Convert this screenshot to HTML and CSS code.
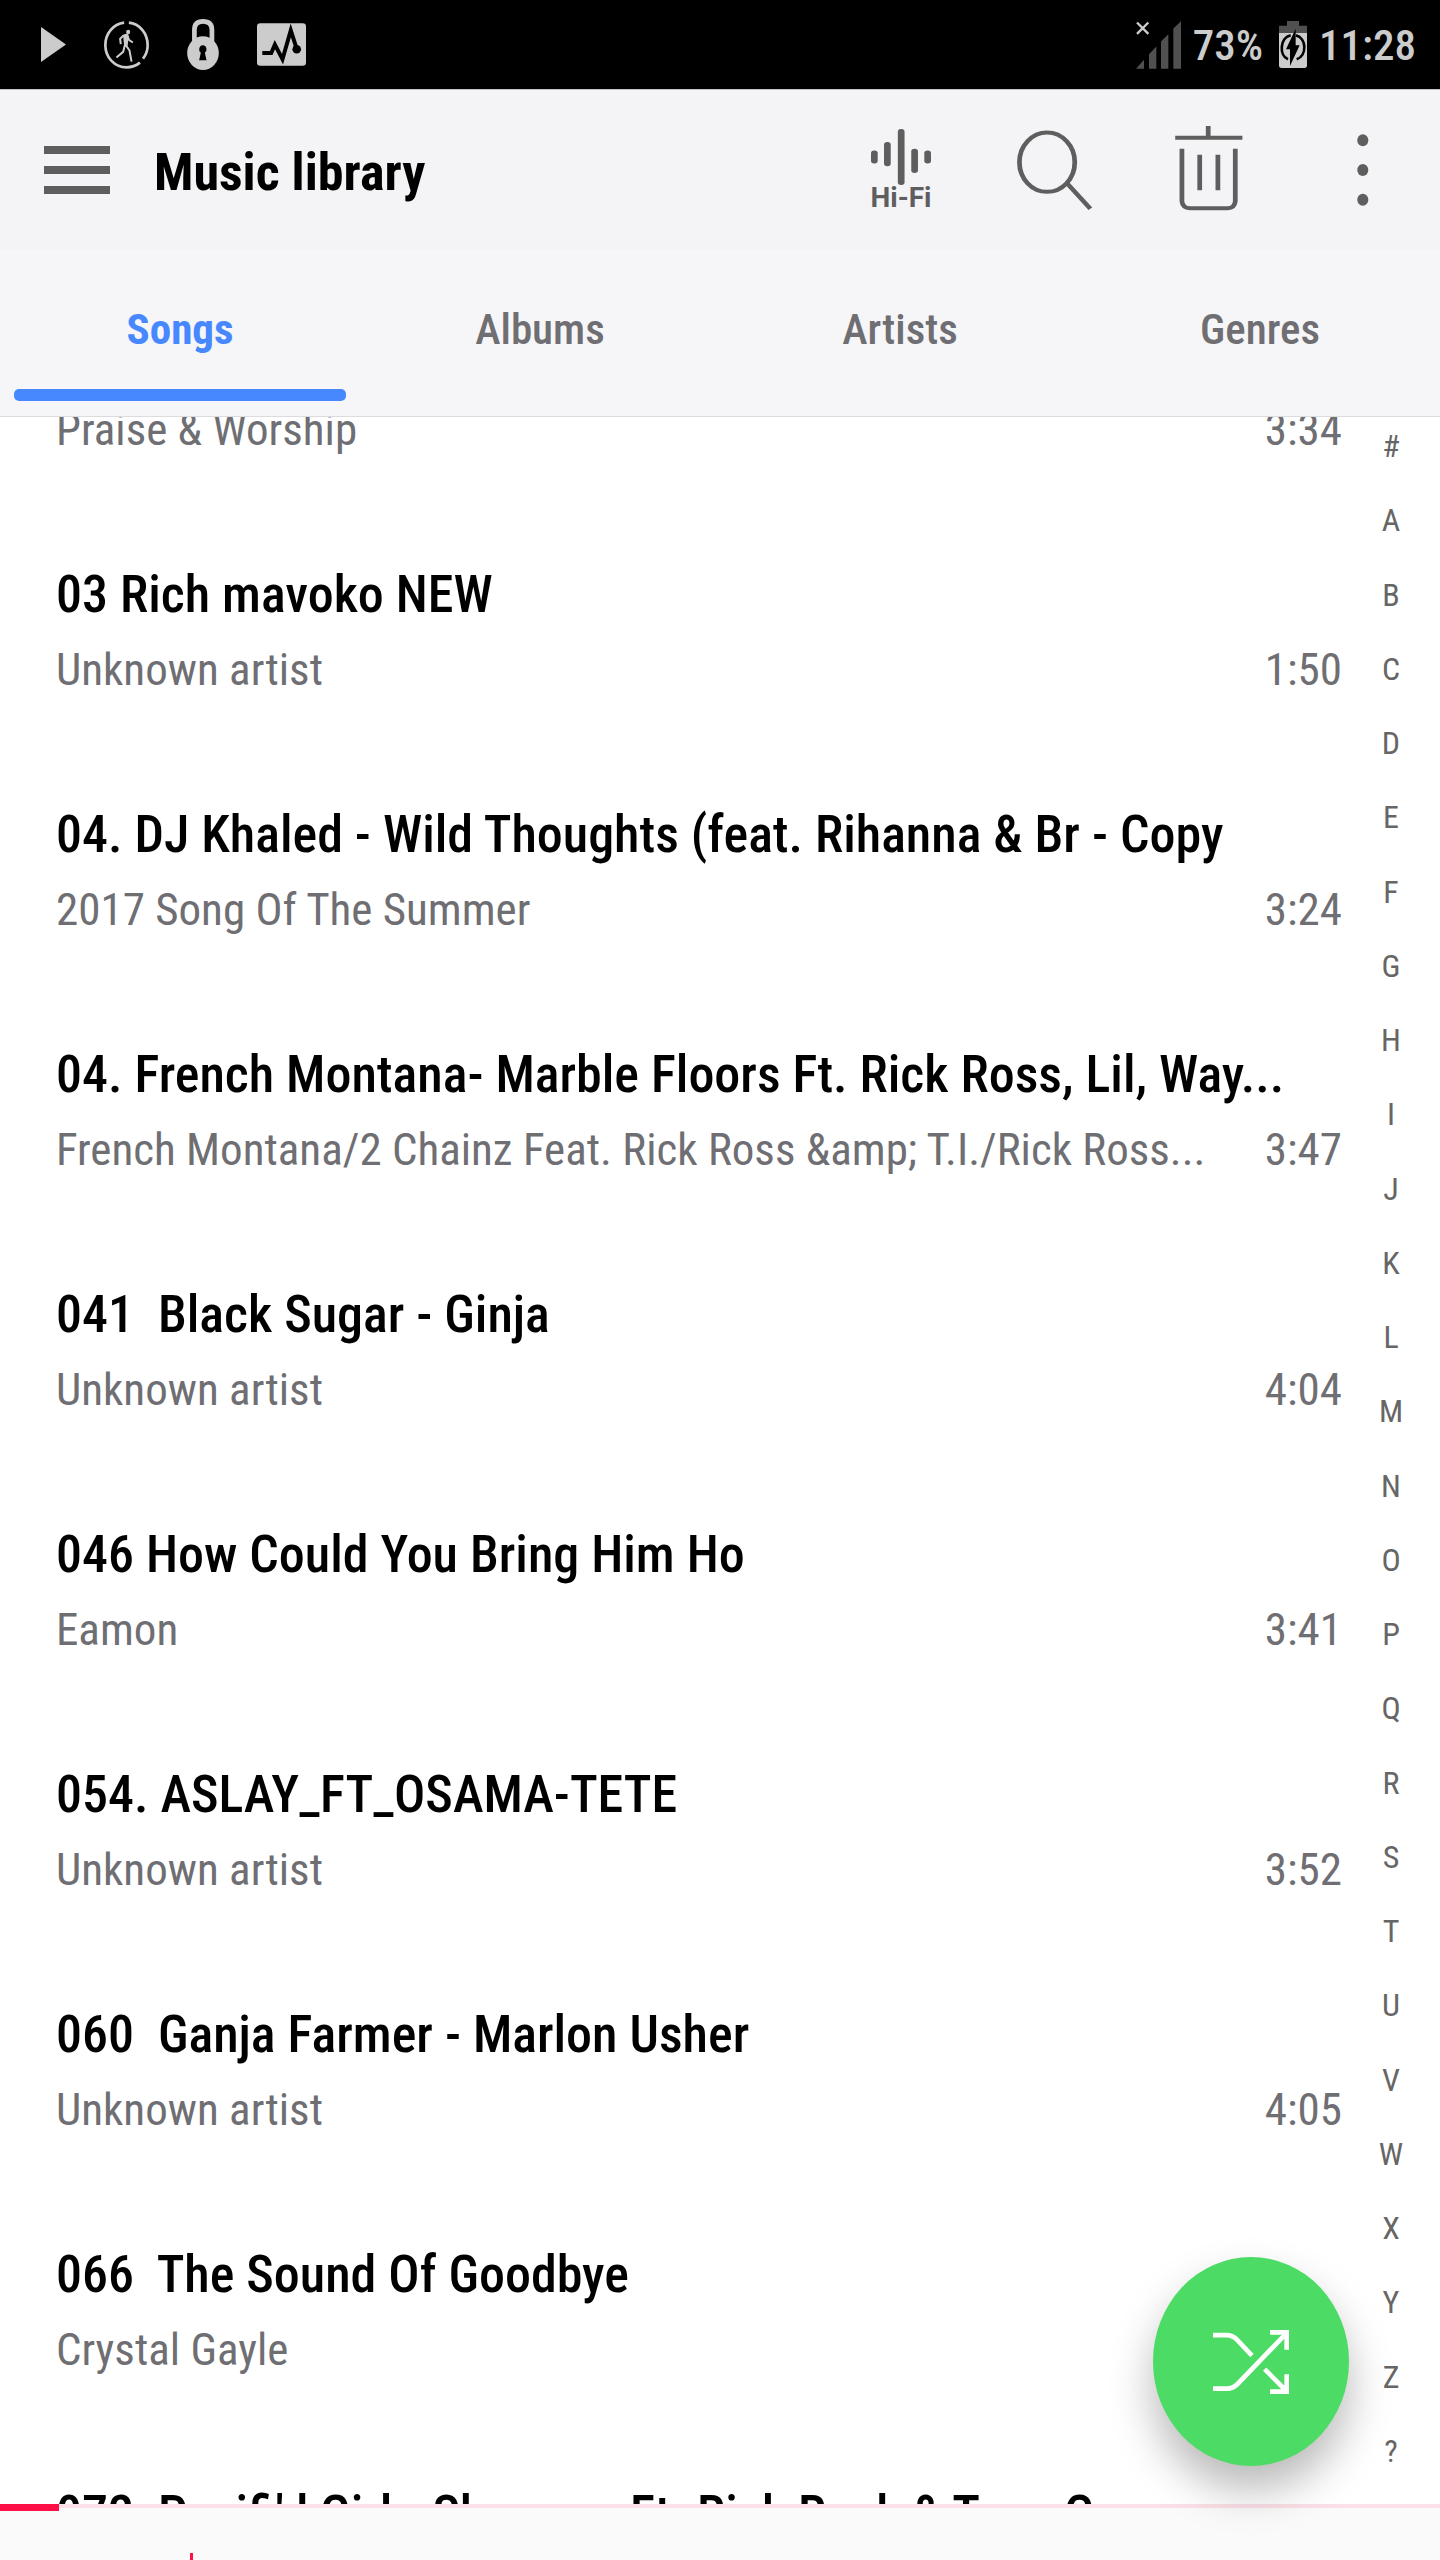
FILE: index.html
```html
<!DOCTYPE html>
<html lang="en">
<head>
<meta charset="utf-8">
<meta name="viewport" content="width=device-width, initial-scale=1">
<title>Music library</title>
<link rel="stylesheet" href="styles.css">
</head>
<body>
<div class="app">
  <div class="status">
    <div class="status-group status-left">
      <svg class="glyph" width="25" height="35" viewBox="0 0 25 35" aria-hidden="true"><path d="M0 0L25 17.500L0 35Z"/></svg>
      <svg class="glyph" width="45" height="48" viewBox="318 60 134 143" preserveAspectRatio="none" aria-hidden="true">
        <path d="M378 65C345 69 322 98 322 132C322 169 350 198 385 198C400 198 414 193 425 184M392 65C424 68 448 97 448 132C448 148 443 161 434 172" fill="none" stroke="#ccc" stroke-width="8"/>
        <ellipse cx="390" cy="93" rx="6" ry="7"/>
        <path d="M376 103L386 101L393 117L404 124M376 103L366 113L368 129M385 105L381 129L394 148L400 181M380 132L375 152L355 169" fill="none" stroke="#ccc" stroke-width="6"/>
        <path d="M375 103L392 103L388 135L378 135Z"/>
      </svg>
      <svg class="glyph" width="32" height="51" viewBox="569 56 95 151" preserveAspectRatio="none" aria-hidden="true">
        <path d="M591 122V88C591 70 601 63 616.500 63C632 63 643 70 643 88V122" fill="none" stroke="#ccc" stroke-width="14"/>
        <ellipse cx="616.500" cy="157" rx="47" ry="50"/>
        <path d="M616 134a11 12 0 0 1 6 22l5 22h-22l5-22a11 12 0 0 1 6-22Z" fill="#000"/>
      </svg>
      <svg class="glyph" width="49" height="43" viewBox="773 67 148 129" aria-hidden="true">
        <rect x="773" y="67" width="148" height="129" rx="10"/>
        <path d="M789 157H816L827 132L850 176L875 89L893 145" fill="none" stroke="#000" stroke-width="12"/>
        <circle cx="893" cy="146" r="13" fill="#000"/>
      </svg>
    </div>
    <div class="status-group">
      <svg width="45" height="48" viewBox="123 61 135 143" aria-hidden="true">
        <path d="M123 204L147 177V204ZM162 204V160L184 137V204ZM198 204V122L220 100V204ZM235 204V83L258 61V204Z" fill="#505050"/>
        <path d="M126 65L160 99M160 65L126 99" stroke="#ccc" stroke-width="7"/>
      </svg>
      <span>73%</span>
      <svg class="glyph battery" width="28" height="47" viewBox="561 63 84 141" aria-hidden="true">
        <path d="M585 63H621V77H645V99H561V77H585Z" fill="#505050"/>
        <path d="M561 99H645V196Q645 204 637 204H569Q561 204 561 196Z"/>
        <path d="M596 106C564 112 560 166 588 178M612 106C644 114 646 166 614 178" fill="none" stroke="#000" stroke-width="8"/>
        <path d="M611 86L582 148H594V198L623 136H611Z" fill="#000"/>
      </svg>
      <span>11:28</span>
    </div>
  </div>

  <header class="toolbar">
    <button class="menu-btn" type="button" aria-label="Menu"><span class="menu-lines"></span></button>
    <h1 class="title">Music library</h1>
    <div class="actions">
      <button class="action" type="button">
        <svg width="60" height="56" viewBox="129 121 152 167" preserveAspectRatio="none" aria-hidden="true"><g fill="#5e5e5e"><rect x="129" y="185" width="17" height="39" rx="8"/><rect x="162" y="160" width="17" height="72" rx="8"/><rect x="197" y="121" width="17" height="167" rx="8"/><rect x="231" y="180" width="17" height="72" rx="8"/><rect x="264" y="185" width="17" height="39" rx="8"/></g></svg>
        <span class="hifi">Hi-Fi</span>
      </button>
      <button class="action" type="button" aria-label="Search">
        <svg class="line" width="100" height="100" viewBox="468 90 253 300" preserveAspectRatio="none" aria-hidden="true"><ellipse cx="574.500" cy="216.500" rx="70" ry="89"/><path d="M626 281L684 356"/></svg>
      </button>
      <button class="action" type="button" aria-label="Delete">
        <svg class="line" width="100" height="100" viewBox="858 90 253 300" preserveAspectRatio="none" aria-hidden="true"><path d="M899 143.500H1069M982.500 108V143M916 176V334Q918 354 936 355H1032Q1049 354 1051 334V176M961 194V301M1007 194V301"/></svg>
      </button>
      <button class="action" type="button" aria-label="More options">
        <svg width="100" height="100" viewBox="1247 90 253 300" preserveAspectRatio="none" aria-hidden="true"><g fill="#5e5e5e"><ellipse cx="1373" cy="151" rx="14" ry="18"/><ellipse cx="1373" cy="240" rx="14" ry="18"/><ellipse cx="1373" cy="329" rx="14" ry="18"/></g></svg>
      </button>
    </div>
  </header>

  <nav class="tabs" aria-label="Library">
    <a class="tab tab-active" href="#songs" aria-current="page">Songs</a>
    <a class="tab" href="#albums">Albums</a>
    <a class="tab" href="#artists">Artists</a>
    <a class="tab" href="#genres">Genres</a>
  </nav>

  <main class="content" id="songs">
    <ul class="songs">
      <li class="song song-scrolled"><div class="meta"><span class="artist">Praise &amp; Worship</span><span>3:34</span></div></li>
      <li class="song"><div class="name">03 Rich mavoko NEW</div><div class="meta"><span class="artist">Unknown artist</span><span>1:50</span></div></li>
      <li class="song"><div class="name">04. DJ Khaled - Wild Thoughts (feat. Rihanna &amp; Br - Copy</div><div class="meta"><span class="artist">2017 Song Of The Summer</span><span>3:24</span></div></li>
      <li class="song"><div class="name">04. French Montana- Marble Floors Ft. Rick Ross, Lil, Way...</div><div class="meta"><span class="artist">French Montana/2 Chainz Feat. Rick Ross &amp;amp; T.I./Rick Ross...</span><span>3:47</span></div></li>
      <li class="song"><div class="name">041  Black Sugar - Ginja</div><div class="meta"><span class="artist">Unknown artist</span><span>4:04</span></div></li>
      <li class="song"><div class="name">046 How Could You Bring Him Ho</div><div class="meta"><span class="artist">Eamon</span><span>3:41</span></div></li>
      <li class="song"><div class="name">054. ASLAY_FT_OSAMA-TETE</div><div class="meta"><span class="artist">Unknown artist</span><span>3:52</span></div></li>
      <li class="song"><div class="name">060  Ganja Farmer - Marlon Usher</div><div class="meta"><span class="artist">Unknown artist</span><span>4:05</span></div></li>
      <li class="song"><div class="name">066  The Sound Of Goodbye</div><div class="meta"><span class="artist">Crystal Gayle</span></div></li>
      <li class="song"><div class="name">072  Pacifi'd Girl - Shawana Ft. Rick Rock &amp; Tone C</div></li>
    </ul>
    <nav class="index" aria-label="Alphabet index">
      <a href="#songs">#</a><a href="#songs">A</a><a href="#songs">B</a><a href="#songs">C</a><a href="#songs">D</a><a href="#songs">E</a><a href="#songs">F</a><a href="#songs">G</a><a href="#songs">H</a><a href="#songs">I</a><a href="#songs">J</a><a href="#songs">K</a><a href="#songs">L</a><a href="#songs">M</a><a href="#songs">N</a><a href="#songs">O</a><a href="#songs">P</a><a href="#songs">Q</a><a href="#songs">R</a><a href="#songs">S</a><a href="#songs">T</a><a href="#songs">U</a><a href="#songs">V</a><a href="#songs">W</a><a href="#songs">X</a><a href="#songs">Y</a><a href="#songs">Z</a><a href="#songs">?</a>
    </nav>
  </main>

  <footer class="player">
    <div class="track"><div class="progress" style="width:4.100%"></div></div>
    <div class="needle"></div>
  </footer>

  <button class="shuffle" type="button" aria-label="Shuffle">
    <svg width="76" height="64" viewBox="279 330 228 190" preserveAspectRatio="none" aria-hidden="true"><path d="M279 345H320C332 345 341 349 350 358L396 406M279 504H320C332 504 343 500 352 491L496 343M450 337H500V389M434 446L496 508M450 513H500V461" fill="none" stroke="#fff" stroke-width="14"/></svg>
  </button>
</div>
</body>
</html>
```
FILE: styles.css
```css
* { box-sizing: border-box; }

body {
  margin: 0;
  background: #fff;
  color: #6e6e73;
  font-family: "Roboto Condensed", Roboto, "Liberation Sans", sans-serif;
  font-size: 45px;
}

a { color: inherit; text-decoration: none; }

button {
  padding: 0;
  border: 0;
  background: none;
  color: #5e5e5e;
  font: inherit;
}

svg { display: block; }

.app {
  position: relative;
  display: flex;
  flex-direction: column;
  height: 100vh;
  overflow: hidden;
}

/* Status bar */
.status {
  display: flex;
  flex: none;
  justify-content: space-between;
  height: 90px;
  padding: 0 24px 0 41px;
  border-bottom: 1px solid #c4c4c4;
  background: #000;
  color: #ccc;
  font-size: 43px;
  font-weight: 500;
}
.status-group { display: flex; align-items: center; gap: 12px; }
.status-left { gap: 38px; }
.glyph { fill: #ccc; }
.battery { margin-left: 4px; }

/* Toolbar */
.toolbar {
  display: flex;
  flex: none;
  align-items: center;
  height: 160px;
  padding-left: 44px;
  background: #f4f4f7;
}
.menu-btn { padding: 10px 0; }
.menu-lines {
  display: block;
  width: 66px;
  height: 48px;
  border: solid #5e5e5e;
  border-width: 8px 0;
  background: linear-gradient(#5e5e5e, #5e5e5e) center / 100% 8px no-repeat;
}
.title {
  flex: 1;
  margin: 0;
  padding: 6px 0 0 44px;
  color: #000;
  font-size: 52px;
  font-weight: 700;
  line-height: 64px;
}
.actions { display: flex; }
.action {
  display: flex;
  flex-direction: column;
  align-items: center;
  justify-content: center;
  width: 154px;
  height: 160px;
}
.line { fill: none; stroke: #5e5e5e; stroke-width: 12px; }
.hifi {
  font-family: Roboto, sans-serif;
  font-size: 28px;
  font-weight: 700;
  line-height: 26px;
}

/* Tabs */
.tabs {
  display: grid;
  flex: none;
  grid-template-columns: repeat(4, 1fr);
  height: 167px;
  border-bottom: 1px solid #dcdcde;
  background: #f6f6f8;
}
.tab {
  padding: 42px 14px 0;
  font-size: 43px;
  font-weight: 500;
  line-height: 74px;
  text-align: center;
}
.tab-active { color: #4788ff; font-weight: 700; }
.tab-active::after {
  content: "";
  display: block;
  height: 12px;
  margin-top: 23px;
  border-radius: 5px;
  background: #4788ff;
}

/* Song list */
.content {
  display: flex;
  flex: 1;
  min-height: 0;
  overflow: hidden;
}
.songs {
  flex: 1;
  min-width: 0;
  margin: 0;
  padding: 0 0 0 56px;
  list-style: none;
}
.song { height: 240px; padding: 45px 0; white-space: pre; }
.song-scrolled {
  display: flex;
  flex-direction: column;
  justify-content: flex-end;
  height: 95px;
  padding-top: 0;
  overflow: hidden;
}
.name {
  color: #000;
  font-size: 52px;
  font-weight: 500;
  line-height: 76px;
}
.meta {
  display: flex;
  justify-content: space-between;
  line-height: 74px;
}

.index {
  display: flex;
  flex-direction: column;
  justify-content: space-between;
  align-items: center;
  width: 98px;
  padding: 13px 0 37px;
  color: #666;
  font-size: 32px;
  line-height: 32px;
}

/* Mini player */
.player { flex: none; height: 56px; background: #fafafa; }
.track { height: 4px; background: #fce0e7; }
.progress { height: 7px; background: #ff0f46; }
.needle {
  width: 3px;
  height: 7px;
  margin: 45px 0 0 190px;
  background: #ff0f46;
}

/* Floating shuffle button */
.shuffle {
  position: absolute;
  right: 91px;
  bottom: 94px;
  display: grid;
  place-items: center;
  width: 196px;
  height: 209px;
  border-radius: 50%;
  background: #4cdb64;
  box-shadow: 0 24px 44px rgba(0, 0, 0, 0.28);
}
```
